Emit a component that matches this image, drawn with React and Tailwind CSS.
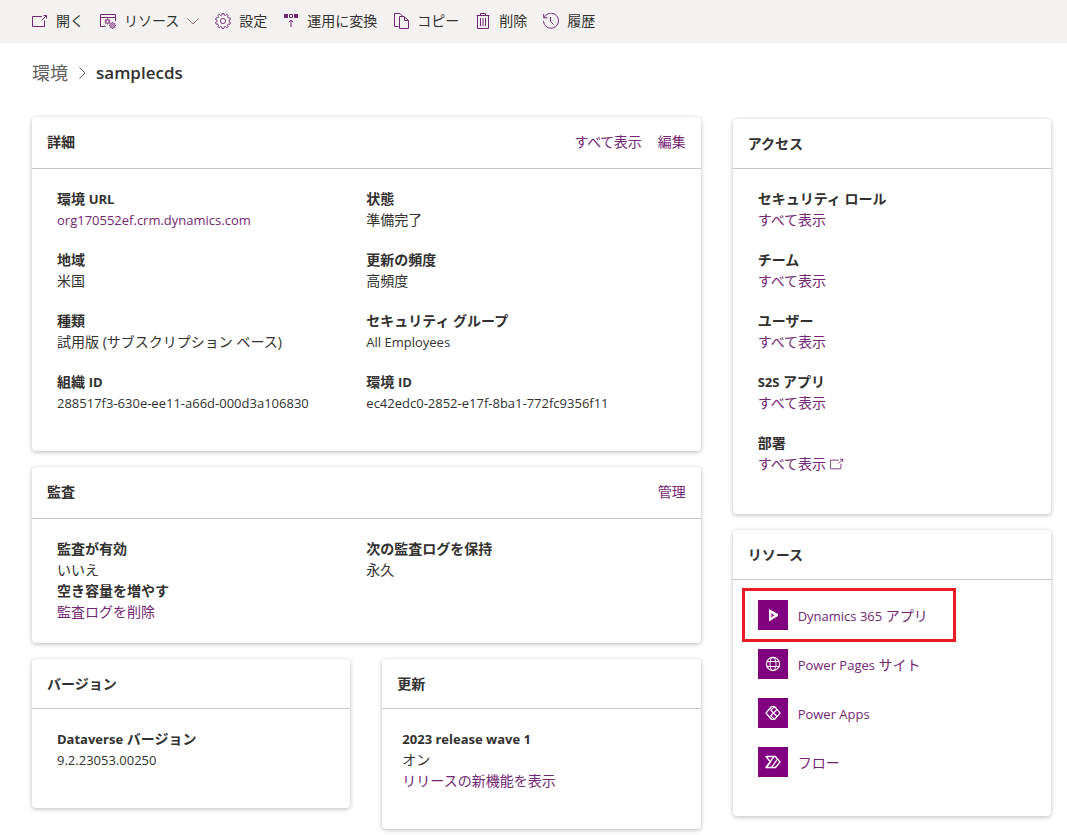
import { useState } from "react";

function gearPath(cx, cy, teeth, outer, inner) {
    const step = (Math.PI * 2) / teeth;
    const points = [];
    for (let i = 0; i < teeth; i++) {
        const a = i * step - Math.PI / 2;
        [[-0.3, inner], [-0.2, outer], [0.2, outer], [0.3, inner]].forEach(([t, r]) => {
            const x = cx + r * Math.cos(a + t * step);
            const y = cy + r * Math.sin(a + t * step);
            points.push(`${x.toFixed(2)} ${y.toFixed(2)}`);
        });
    }
    return `M${points.join("L")}Z`;
}

function Icon({ children, className = "size-4" }) {
    return (
        <svg viewBox="0 0 16 16" fill="none" stroke="currentColor" className={`${className} shrink-0`} aria-hidden="true">
            {children}
        </svg>
    );
}

function OpenIcon({ className }) {
    return (
        <Icon className={className}>
            <path d="M10 3.5H0.5V13.5H12.5V7.5" />
            <path d="M9.5 7.5L14.5 2.5M11.5 2.5H14.5V5.5" />
        </Icon>
    );
}

function ResourceIcon() {
    return (
        <Icon className="size-4">
            <path d="M5.5 13.5H0.5V1.5H15.5V8M0.5 4.5H15.5" />
            <path d={gearPath(7.5, 8.5, 6, 2.6, 1.4)} strokeWidth="0.9" />
            <path d={gearPath(12.5, 12.5, 8, 3, 2.1)} strokeWidth="0.9" />
            <circle cx="12.5" cy="12.5" r="0.9" strokeWidth="0.8" />
        </Icon>
    );
}

function SettingsIcon() {
    return (
        <Icon>
            <path d={gearPath(8, 8, 10, 7.6, 6.1)} strokeWidth="0.9" strokeLinejoin="round" />
            <circle cx="8" cy="8" r="2.6" strokeWidth="0.9" />
        </Icon>
    );
}

function ConvertIcon() {
    return (
        <Icon>
            <path d="M1 1H5V5H1ZM11 1H15V5H11Z" fill="currentColor" stroke="none" />
            <path d="M6.5 1.5H9.5V4.5H6.5Z" />
            <path d="M8 14V7M5.8 9.2L8 7L10.2 9.2" />
        </Icon>
    );
}

function CopyIcon() {
    return (
        <Icon>
            <path d="M5.5 13.5H1.5V0.5H7L10 3.5" />
            <path d="M6.5 3.5H11L15.5 7.5V15.5H6.5ZM11.5 4V7.5H15.5" />
        </Icon>
    );
}

function TrashIcon() {
    return (
        <Icon>
            <path d="M1.5 2.5H14.5M5.5 2.5V0.5H10.5V2.5M2.5 2.5V15.5H13.5V2.5" />
            <path d="M5.5 5V13M8 5V13M10.5 5V13" />
        </Icon>
    );
}

function HistoryIcon() {
    return (
        <Icon>
            <path d="M1.2 4.5A7.5 7.5 0 1 1 0.5 8M0.7 1V4.8H4.5M7.5 4V8.5L10.5 11.5" />
        </Icon>
    );
}

function DynamicsIcon() {
    return (
        <Icon>
            <path
                d="M4 2L13 7V9L4 14.5ZM5.8 6.2V10.6L9.6 8.2Z"
                fill="currentColor"
                fillRule="evenodd"
                stroke="none"
            />
            <path d="M5.8 6.2L7.8 8.4L5.8 10.2Z" fill="currentColor" fillOpacity="0.45" stroke="none" />
        </Icon>
    );
}

function GlobeIcon() {
    return (
        <Icon>
            <circle cx="8" cy="8" r="6.6" strokeWidth="1.2" />
            <ellipse cx="8" cy="8" rx="3" ry="6.6" />
            <path d="M2 5.5H14M2 10.5H14" />
        </Icon>
    );
}

function PowerAppsIcon() {
    return (
        <Icon>
            <path d="M6.5 1.5H9.5L15 8L9.5 14.5H6.5L1 8Z" strokeWidth="1.2" strokeLinejoin="round" />
            <path d="M9.5 1.5L5.8 5.2L12 11.5M9.5 14.5L5.8 10.8L12 4.5" strokeWidth="1.2" />
        </Icon>
    );
}

function FlowIcon() {
    return (
        <Icon>
            <path d="M1 2.5H10.5L15 8L10.5 13.5H1L5.5 8Z" strokeWidth="1.3" strokeLinejoin="round" />
            <path d="M9 2.5L1.5 13M12.5 5L6.5 13.5" strokeWidth="1.3" />
        </Icon>
    );
}

function Latin({ children }) {
    return <span className="text-[13px] leading-none">{children}</span>;
}

function Card({ title, actions, tall, children }) {
    return (
        <section className="rounded bg-white shadow-[0_1px_4px_rgba(0,0,0,0.28)]">
            <header className={`${tall ? "h-[52px] pb-0.5" : "h-[50px]"} flex items-center justify-between border-b border-[#c8c6c4] px-[15px]`}>
                <h2 className="font-bold">{title}</h2>
                {actions && <div className="flex gap-4">{actions}</div>}
            </header>
            {children}
        </section>
    );
}

function Field({ label, children }) {
    return (
        <div>
            <dt className="font-bold">{label}</dt>
            <dd>{children}</dd>
        </div>
    );
}

function Link({ children, className = "" }) {
    return <a href="#" className={`text-[#742774] hover:underline ${className}`}>{children}</a>;
}

const commands = [
    { label: "開く", icon: <OpenIcon /> },
    { label: "リソース", icon: <ResourceIcon />, menu: true },
    { label: "設定", icon: <SettingsIcon /> },
    { label: "運用に変換", icon: <ConvertIcon /> },
    { label: "コピー", icon: <CopyIcon /> },
    { label: "削除", icon: <TrashIcon /> },
    { label: "履歴", icon: <HistoryIcon /> },
];

const details = [
    { label: <>環境 <Latin>URL</Latin></>, value: <Link><Latin>org170552ef.crm.dynamics.com</Latin></Link> },
    { label: "状態", value: "準備完了" },
    { label: "地域", value: "米国" },
    { label: "更新の頻度", value: "高頻度" },
    { label: "種類", value: "試用版 (サブスクリプション ベース)" },
    { label: "セキュリティ グループ", value: <Latin>All Employees</Latin> },
    { label: <>組織 <Latin>ID</Latin></>, value: <Latin>288517f3-630e-ee11-a66d-000d3a106830</Latin> },
    { label: <>環境 <Latin>ID</Latin></>, value: <Latin>ec42edc0-2852-e17f-8ba1-772fc9356f11</Latin> },
];

const access = [
    { label: "セキュリティ ロール" },
    { label: "チーム" },
    { label: "ユーザー" },
    { label: <><Latin>S2S</Latin> アプリ</> },
    { label: "部署", external: true },
];

const resources = [
    { id: "dynamics", label: <><Latin>Dynamics 365</Latin> アプリ</>, icon: <DynamicsIcon /> },
    { id: "pages", label: <><Latin>Power Pages</Latin> サイト</>, icon: <GlobeIcon /> },
    { id: "apps", label: <Latin>Power Apps</Latin>, icon: <PowerAppsIcon /> },
    { id: "flow", label: "フロー", icon: <FlowIcon /> },
];

export default function App() {

    const [marked, setMarked] = useState("dynamics");

    return (
        <div className="min-h-screen bg-white pb-1 font-['Open_Sans','Noto_Sans_CJK_JP',sans-serif] text-sm leading-[21px] text-[#323130]" lang="ja">
            <nav className="flex h-[43px] items-center gap-4 bg-[#f3f2f1] px-8 pb-0.5">
                {commands.map((command) => (
                    <button key={command.label} className="flex items-center gap-2 whitespace-nowrap">
                        <span className="text-[#742774]">{command.icon}</span>
                        {command.label}
                        {command.menu && (
                            <Icon className="size-3">
                                <path d="M0.5 4.5L8 12L15.5 4.5" stroke="#8a6a6a" strokeWidth="1.3" />
                            </Icon>
                        )}
                    </button>
                ))}
            </nav>
            <main className="pr-4 pl-8">
                <div className="flex h-[74px] items-center gap-2 pb-3.5 text-lg">
                    <a href="#" className="text-[#605e5c]">環境</a>
                    <Icon className="size-3">
                        <path d="M4.5 0.5L12 8L4.5 15.5" stroke="#605e5c" strokeWidth="1.3" />
                    </Icon>
                    <h1 className="text-[17px] font-semibold">samplecds</h1>
                </div>
                <div className="grid grid-cols-3 items-start gap-x-8">
                    <div className="col-span-2 grid gap-4">
                        <Card
                            title="詳細"
                            tall
                            actions={<>
                                <Link className="[font-feature-settings:'palt']">すべて表示</Link>
                                <Link>編集</Link>
                            </>}
                        >
                            <dl className="grid grid-cols-2 gap-y-[19px] px-[25px] pt-[19px] pb-[38px]">
                                {details.map((item, i) => (
                                    <Field key={i} label={item.label}>{item.value}</Field>
                                ))}
                            </dl>
                        </Card>
                        <Card title="監査" tall actions={<Link>管理</Link>}>
                            <dl className="grid grid-cols-2 px-[25px] pt-[19px] pb-[21px]">
                                <Field label="監査が有効">いいえ</Field>
                                <Field label="次の監査ログを保持">永久</Field>
                                <Field label="空き容量を増やす"><Link>監査ログを削除</Link></Field>
                            </dl>
                        </Card>
                        <div className="grid grid-cols-2 items-start gap-x-8">
                            <Card title="バージョン">
                                <dl className="px-[25px] pt-[19px] pb-[38px]">
                                    <Field label={<><Latin>Dataverse</Latin> バージョン</>}><Latin>9.2.23053.00250</Latin></Field>
                                </dl>
                            </Card>
                            <Card title="更新">
                                <dl className="px-5 pt-[19px] pb-[38px]">
                                    <Field label={<Latin>2023 release wave 1</Latin>}>
                                        オン
                                        <Link className="block">リリースの新機能を表示</Link>
                                    </Field>
                                </dl>
                            </Card>
                        </div>
                    </div>
                    <div className="grid gap-4 pt-0.5">
                        <Card title="アクセス">
                            <dl className="grid gap-y-[19px] px-[25px] pt-[19px] pb-10">
                                {access.map((item, i) => (
                                    <Field key={i} label={item.label}>
                                        <Link className="inline-flex items-center gap-1">
                                            すべて表示
                                            {item.external && <OpenIcon className="size-3.5" />}
                                        </Link>
                                    </Field>
                                ))}
                            </dl>
                        </Card>
                        <Card title="リソース">
                            <ul className="grid gap-y-[19px] px-[25px] pt-5 pb-[39px]">
                                {resources.map((item) => (
                                    <li key={item.id} className="relative">
                                        <a href="#" onClick={() => { setMarked(item.id) }} className="flex items-center gap-2.5 text-[#742774]">
                                            <span className="flex size-[30px] items-center justify-center bg-[#800080] text-white">{item.icon}</span>
                                            {/* the label may hold two text sizes, so it is kept in one box */}
                                            <span>{item.label}</span>
                                        </a>
                                        {marked === item.id && (
                                            <div className="pointer-events-none absolute -inset-y-3 -left-4 w-[214px] border-3 border-[#ed1c24]" />
                                        )}
                                    </li>
                                ))}
                            </ul>
                        </Card>
                    </div>
                </div>
            </main>
        </div>
    )
}
